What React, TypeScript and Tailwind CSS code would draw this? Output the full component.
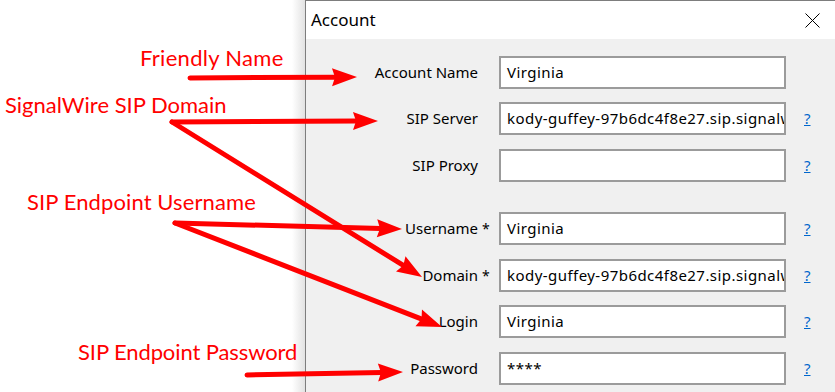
const rows = [
  { label: "Account Name", value: "Virginia", star: false, help: false, gap: "mt-[17px]" },
  { label: "SIP Server", value: "kody-guffey-97b6dc4f8e27.sip.signalw", star: false, help: true, gap: "mt-[13px]" },
  { label: "SIP Proxy", value: "", star: false, help: true, gap: "mt-[14px]" },
  { label: "Username", value: "Virginia", star: true, help: true, gap: "mt-[30px]" },
  { label: "Domain", value: "kody-guffey-97b6dc4f8e27.sip.signalw", star: true, help: true, gap: "mt-[14px]" },
  { label: "Login", value: "Virginia", star: false, help: true, gap: "mt-[13px]" },
  { label: "Password", value: "****", star: false, help: true, gap: "mt-[14px]" },
]

// start and tip of each annotation arrow
const arrows: [number, number, number, number][] = [
  [190, 78, 357, 77],
  [172, 122, 378, 121],
  [172, 122, 422, 277],
  [175, 223, 402, 229],
  [175, 223, 442, 327],
  [247, 375, 403, 372],
]

function Arrow({ a }: { a: [number, number, number, number] }) {
  const [x1, y1, x2, y2] = a
  const dx = x2 - x1
  const dy = y2 - y1
  const len = Math.hypot(dx, dy)
  const ux = dx / len
  const uy = dy / len
  const bx = x2 - ux * 25
  const by = y2 - uy * 25
  const px = -uy * 9
  const py = ux * 9
  const head = `${x2},${y2} ${bx + px},${by + py} ${bx + ux * 3},${by + uy * 3} ${bx - px},${by - py}`
  return (
    <g>
      <line x1={x1} y1={y1} x2={bx + ux * 4} y2={by + uy * 4} stroke="#ff0000" strokeWidth={5} strokeLinecap="round" />
      <polygon points={head} fill="#ff0000" />
    </g>
  )
}

export default function App() {
  return (
    <div className="relative w-[835px] h-[392px] overflow-hidden bg-white flex">
      {/* annotations */}
      <div className="relative z-10 w-[292px] shrink-0 flex flex-col text-[#ff0000] text-[22px] leading-[22px] whitespace-nowrap" style={{ fontFamily: "Lato, 'Open Sans', sans-serif" }}>
        <div className="mt-[47px] pl-[140px] h-[22px] tracking-[0.3px]">Friendly Name</div>
        <div className="mt-[25px] pl-[5px] h-[22px]">SignalWire SIP Domain</div>
        <div className="mt-[75px] pl-[27px] h-[22px] tracking-[0.1px]">SIP Endpoint Username</div>
        <div className="mt-[128px] pl-[78px] h-[22px] tracking-[-0.1px]">SIP Endpoint Password</div>
      </div>
      <div className="w-[13px] shrink-0 bg-gradient-to-r from-white to-[#e2e2e2]" />

      {/* dialog */}
      <div className="flex-1 border-l border-t border-[#7d7d7d] bg-[#f0f0f0] text-[15px] text-black" style={{ fontFamily: "'Noto Sans', sans-serif" }}>
        <div className="h-[38px] bg-white flex items-center justify-between pl-[5px] pr-[15px]">
          <span className="text-[17px]">Account</span>
          <svg width="15" height="15" viewBox="0 0 15 15">
            <path d="M0.5 0.5 L14.5 14.5 M14.5 0.5 L0.5 14.5" stroke="#000" strokeWidth="1" />
          </svg>
        </div>
        <div className="flex flex-col">
          {rows.map((r) => (
            <div key={r.label} className={`${r.gap} flex items-center h-[33px]`}>
              <div className="w-[172px] shrink-0 text-right">{r.label}</div>
              <div className="w-[21px] shrink-0 pl-[4px] text-[14px]">{r.star ? "*" : ""}</div>
              <div className="w-[287px] shrink-0 h-[33px] border-2 border-[#9b9b9b] bg-white pl-[6px] flex items-center overflow-hidden whitespace-nowrap tracking-[0.45px]">
                {r.value}
              </div>
              {r.help && <div className="ml-[18px] text-[#0066cc] underline">?</div>}
            </div>
          ))}
        </div>
      </div>

      <svg className="absolute inset-0 z-20 pointer-events-none" width="835" height="392">
        {arrows.map((a, i) => (
          <Arrow key={i} a={a} />
        ))}
      </svg>
    </div>
  )
}
